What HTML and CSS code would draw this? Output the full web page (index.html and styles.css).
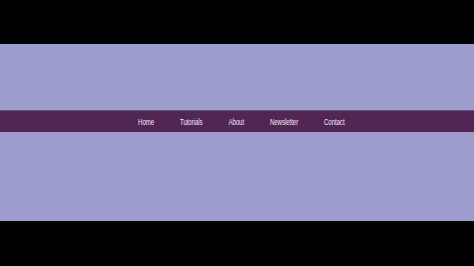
FILE: index.html
```html
<!DOCTYPE html>
<html lang="en">
<head>
<meta charset="utf-8">
<title>Menu</title>
<link rel="stylesheet" href="styles.css">
</head>
<body>
<div class="frame">
  <main class="stage">
    <nav class="menu">
      <ul class="menu-list">
        <li class="menu-item"><a href="#">Home</a></li>
        <li class="menu-item"><a href="#">Tutorials</a></li>
        <li class="menu-item"><a href="#">About</a></li>
        <li class="menu-item"><a href="#">Newsletter</a></li>
        <li class="menu-item"><a href="#">Contact</a></li>
      </ul>
    </nav>
  </main>
</div>
</body>
</html>
```

FILE: styles.css
```css
html, body {
  margin: 0;
  padding: 0;
  background: #000;
}
.frame {
  width: 474px;
  height: 266px;
  padding-top: 44px;
  box-sizing: border-box;
}
.stage {
  height: 177px;
  box-sizing: border-box;
  padding-top: 66px;
  background: #9c9dcd;
}
.menu {
  height: 22px;
  box-sizing: border-box;
  background: #512654;
  border-top: 1px solid #6a4c78;
}
.menu-list {
  list-style: none;
  margin: 0;
  padding: 0 0 0 9px;
  height: 100%;
  display: flex;
  justify-content: center;
  align-items: center;
  gap: 38px;
  transform: scaleX(0.68);
  transform-origin: 241px center;
}
.menu-item a {
  display: block;
  color: #f0e8f2;
  text-decoration: none;
  font-family: "Liberation Sans", Arial, sans-serif;
  font-size: 9px;
  line-height: 10px;
  letter-spacing: -0.1px;
}
```
